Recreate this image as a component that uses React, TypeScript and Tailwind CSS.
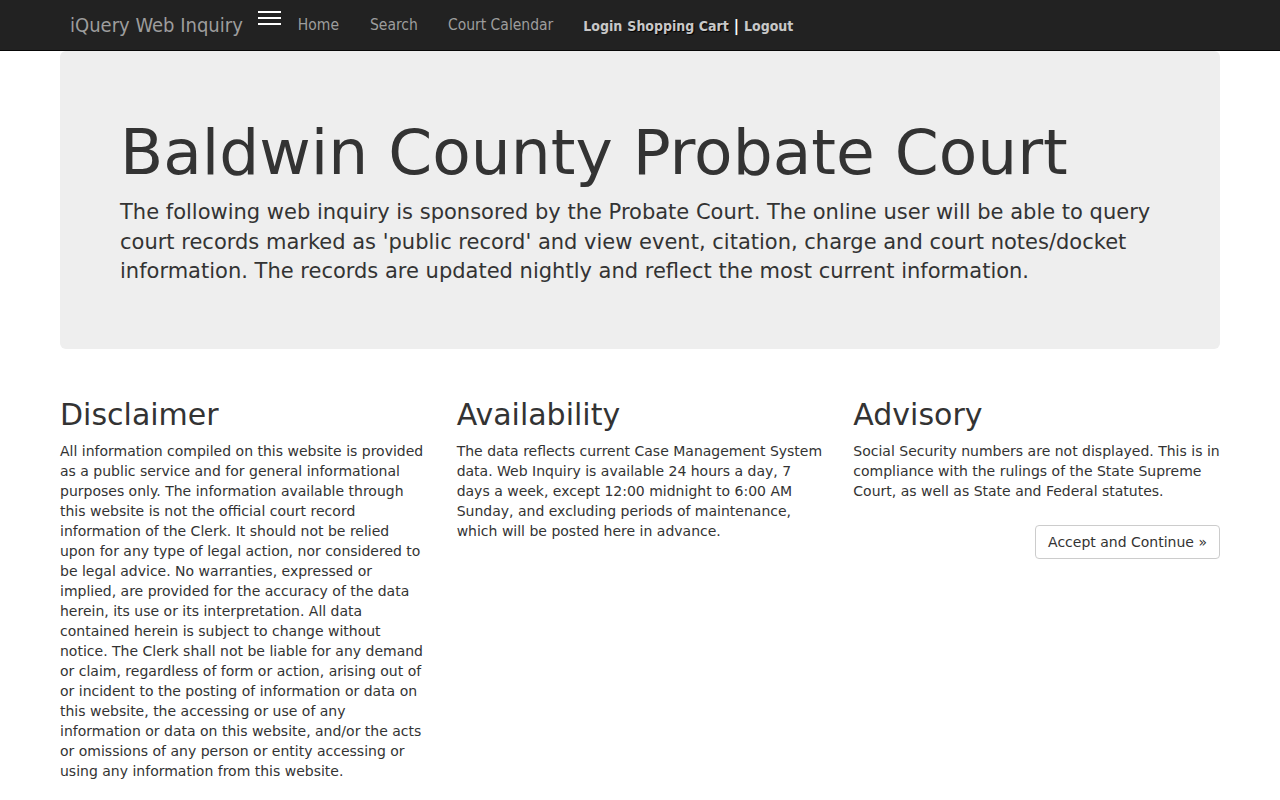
import React from 'react';

const navFont = { fontFamily: '"Liberation Sans Narrow", "DejaVu Sans Condensed", "Liberation Sans", sans-serif' };

const Column: React.FC<{ title: string; children: React.ReactNode }> = ({ title, children }) => (
  <div>
    <h2 className="text-[30px] leading-[33px] mt-[20px] mb-[10px] text-[#333]">{title}</h2>
    {children}
  </div>
);

export default function App() {
  return (
    <div className="min-h-[800px] bg-white text-[#333]" style={{ fontFamily: '"DejaVu Sans", sans-serif' }}>
      <nav className="h-[51px] bg-[#222] border-b border-[#080808]" style={navFont}>
        <div className="flex items-center h-[50px] pl-[70px]">
          <span className="text-[20px] text-[#9d9d9d] mr-[15px]">iQuery Web Inquiry</span>
          <svg width="23" height="18" viewBox="0 0 23 18" className="mb-[14px] mr-[17px]">
            <rect x="0" y="2" width="23" height="2" fill="#fff" />
            <rect x="0" y="8" width="23" height="2" fill="#fff" />
            <rect x="0" y="14" width="23" height="2" fill="#fff" />
          </svg>
          <div className="flex items-center gap-[30px] mt-[2px] text-[15.5px] text-[#9d9d9d]">
            <span>Home</span>
            <span className="ml-[1px]">Search</span>
            <span>Court Calendar</span>
          </div>
          <div className="flex items-center ml-[30px] mt-[2px] text-[14px] font-bold text-[#c8c8c8]">
            <span>Login</span>
            <span className="ml-[5px]" style={{ textShadow: '1px 1px 1px #000' }}>Shopping Cart</span>
            <span className="mx-[5px] text-white text-[16px]">|</span>
            <span>Logout</span>
          </div>
        </div>
      </nav>

      <div className="mx-[60px]">
        <div className="bg-[#eee] rounded-[6px] px-[60px] pt-[67px] pb-[62px]">
          <h1 className="text-[63px] leading-[70px] text-[#333]">Baldwin County Probate Court</h1>
          <p className="text-[21px] leading-[29.5px] mt-[10px] text-[#333]">
            The following web inquiry is sponsored by the Probate Court. The online user will be able to query court records marked as 'public record' and view event, citation, charge and court notes/docket information. The records are updated nightly and reflect the most current information.
          </p>
        </div>

        <div className="grid grid-cols-3 gap-[30px] mt-[29px] text-[14px] leading-[20px]">
          <Column title="Disclaimer">
            <p>
              All information compiled on this website is provided as a public service and for general informational purposes only. The information available through this website is not the official court record information of the Clerk. It should not be relied upon for any type of legal action, nor considered to be legal advice. No warranties, expressed or implied, are provided for the accuracy of the data herein, its use or its interpretation. All data contained herein is subject to change without notice. The Clerk shall not be liable for any demand or claim, regardless of form or action, arising out of or incident to the posting of information or data on this website, the accessing or use of any information or data on this website, and/or the acts or omissions of any person or entity accessing or using any information from this website.
            </p>
          </Column>
          <Column title="Availability">
            <p>
              The data reflects current Case Management System data. Web Inquiry is available 24 hours a day, 7 days a week, except 12:00 midnight to 6:00 AM Sunday, and excluding periods of maintenance, which will be posted here in advance.
            </p>
          </Column>
          <Column title="Advisory">
            <p>
              Social Security numbers are not displayed. This is in compliance with the rulings of the State Supreme Court, as well as State and Federal statutes.
            </p>
            <div className="flex justify-end mt-[24px]">
              <button className="border border-[#ccc] rounded-[4px] bg-white px-[12px] h-[34px] text-[14px] text-[#333]">
                Accept and Continue »
              </button>
            </div>
          </Column>
        </div>
      </div>
    </div>
  );
}
